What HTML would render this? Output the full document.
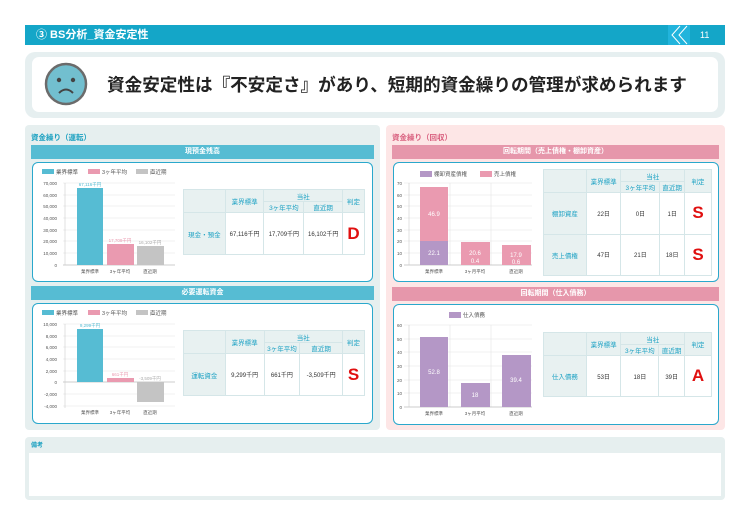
<!DOCTYPE html>
<html><head><meta charset="utf-8"><style>
*{margin:0;padding:0;box-sizing:border-box}
body{width:750px;height:530px;background:#fff;position:relative;overflow:hidden;font-family:"Liberation Sans","Noto Sans CJK JP",sans-serif;color:#333}
.a{position:absolute}
.hb{left:31px;width:343px;height:14px;color:#fff;font-size:7px;font-weight:bold;text-align:center;line-height:14px}
.box{background:#fff;border:1.5px solid #2aa8cc;border-radius:6px}
table{border-collapse:collapse;position:absolute;font-size:6px;text-align:center}
td{border:1px solid #d5e6e8;background:#fff}
td.h{background:#e8f1f1;color:#1ea2c4;font-size:6.5px}
.j{color:#e01010;font-weight:bold;font-size:17px}
svg text{font-family:"Liberation Sans","Noto Sans CJK JP",sans-serif}
</style></head><body>
<div class="a" style="left:25px;top:25px;width:700px;height:20px;background:#14a6c8"></div>
<div class="a" style="left:36px;top:25px;height:20px;line-height:20px;color:#fff;font-weight:bold;font-size:11px">③ BS分析_資金安定性</div>
<div class="a" style="left:668px;top:25px;width:22px;height:20px;background:#22b4dc"></div>
<svg class="a" style="left:668px;top:25px" width="22" height="20"><polyline points="12,1 4,10 12,19" fill="none" stroke="#fff" stroke-width="1"/><polyline points="19,1 11,10 19,19" fill="none" stroke="#fff" stroke-width="1"/></svg>
<div class="a" style="left:700px;top:25px;height:20px;line-height:20px;color:#fff;font-size:9px">11</div>

<div class="a" style="left:25px;top:52px;width:700px;height:66px;background:#e6eff0;border-radius:10px"></div>
<div class="a" style="left:32px;top:57px;width:686px;height:55px;background:#fff;border-radius:7px"></div>
<svg class="a" style="left:44px;top:62px" width="44" height="44"><circle cx="22" cy="22" r="20" fill="#72bfcf" stroke="#6b6b6b" stroke-width="2.5"/><circle cx="15" cy="18" r="2.2" fill="#444"/><circle cx="29" cy="18" r="2.2" fill="#444"/><path d="M15 31 Q22 24 29 31" fill="none" stroke="#444" stroke-width="2"/></svg>
<div class="a" style="left:107px;top:72px;font-size:17.6px;font-weight:bold;color:#222;white-space:nowrap">資金安定性は『不安定さ』があり、短期的資金繰りの管理が求められます</div>

<!-- left panel -->
<div class="a" style="left:25px;top:125px;width:355px;height:305px;background:#e6efef;border-radius:4px"></div>
<div class="a" style="left:31px;top:132px;font-size:7.5px;font-weight:bold;color:#1aa0c0">資金繰り（運転）</div>
<div class="a hb" style="top:145px;background:#56bcd3">現預金残高</div>
<div class="a box" style="left:32px;top:162px;width:341px;height:120px"></div>
<div class="a hb" style="top:286px;background:#56bcd3">必要運転資金</div>
<div class="a box" style="left:32px;top:303px;width:341px;height:121px"></div>

<svg class="a" style="left:32px;top:162px" width="150" height="120" font-size="4.5" fill="#555">
<rect x="10" y="7" width="12" height="5" fill="#56bcd3"/><text x="24" y="12" font-size="5.5">業界標準</text>
<rect x="56" y="7" width="12" height="5" fill="#ea9ab0"/><text x="70" y="12" font-size="5.5">3ヶ年平均</text>
<rect x="104" y="7" width="12" height="5" fill="#c4c4c4"/><text x="118" y="12" font-size="5.5">直近期</text>
<g stroke="#e4e4e4" stroke-width="0.6"><line x1="31" y1="21" x2="143" y2="21"/><line x1="31" y1="33" x2="143" y2="33"/><line x1="31" y1="44" x2="143" y2="44"/><line x1="31" y1="56" x2="143" y2="56"/><line x1="31" y1="68" x2="143" y2="68"/><line x1="31" y1="79" x2="143" y2="79"/><line x1="31" y1="91" x2="143" y2="91"/></g>
<line x1="31" y1="103" x2="143" y2="103" stroke="#bbb" stroke-width="0.8"/><line x1="33" y1="21" x2="33" y2="103" stroke="#ccc" stroke-width="0.6"/>
<g text-anchor="end"><text x="25" y="23">70,000</text><text x="25" y="35">60,000</text><text x="25" y="46">50,000</text><text x="25" y="58">40,000</text><text x="25" y="70">30,000</text><text x="25" y="81">20,000</text><text x="25" y="93">10,000</text><text x="25" y="105">0</text></g>
<rect x="45" y="26" width="26" height="77" fill="#56bcd3"/><rect x="75" y="82" width="27" height="21" fill="#ea9ab0"/><rect x="105" y="84" width="27" height="19" fill="#c4c4c4"/>
<g text-anchor="middle"><text x="58" y="24" fill="#56bcd3">67,116千円</text><text x="88" y="80" fill="#ea9ab0">17,709千円</text><text x="118" y="82" fill="#aaa">16,102千円</text>
<text x="58" y="111">業界標準</text><text x="88" y="111">3ヶ年平均</text><text x="118" y="111">直近期</text></g>
</svg>
<table style="left:183px;top:189px;width:182px;height:66px">
<tr style="height:12px"><td class="h" rowspan="2" style="width:42px"></td><td class="h" rowspan="2" style="width:39px">業界標準</td><td class="h" colspan="2">当社</td><td class="h" rowspan="2" style="width:22px">判定</td></tr>
<tr style="height:11px"><td class="h" style="width:40px">3ヶ年平均</td><td class="h" style="width:39px">直近期</td></tr>
<tr><td class="h">現金・預金</td><td>67,116千円</td><td>17,709千円</td><td>16,102千円</td><td class="j">D</td></tr></table>

<svg class="a" style="left:32px;top:303px" width="150" height="120" font-size="4.5" fill="#555">
<rect x="10" y="7" width="12" height="5" fill="#56bcd3"/><text x="24" y="12" font-size="5.5">業界標準</text>
<rect x="56" y="7" width="12" height="5" fill="#ea9ab0"/><text x="70" y="12" font-size="5.5">3ヶ年平均</text>
<rect x="104" y="7" width="12" height="5" fill="#c4c4c4"/><text x="118" y="12" font-size="5.5">直近期</text>
<g stroke="#e4e4e4" stroke-width="0.6"><line x1="31" y1="21" x2="143" y2="21"/><line x1="31" y1="33" x2="143" y2="33"/><line x1="31" y1="44" x2="143" y2="44"/><line x1="31" y1="56" x2="143" y2="56"/><line x1="31" y1="68" x2="143" y2="68"/><line x1="31" y1="91" x2="143" y2="91"/><line x1="31" y1="103" x2="143" y2="103"/></g>
<line x1="31" y1="79" x2="143" y2="79" stroke="#bbb" stroke-width="0.8"/><line x1="33" y1="21" x2="33" y2="105" stroke="#ccc" stroke-width="0.6"/>
<g text-anchor="end"><text x="25" y="23">10,000</text><text x="25" y="35">8,000</text><text x="25" y="46">6,000</text><text x="25" y="58">4,000</text><text x="25" y="70">2,000</text><text x="25" y="81">0</text><text x="25" y="93">-2,000</text><text x="25" y="105">-4,000</text></g>
<rect x="45" y="26" width="26" height="53" fill="#56bcd3"/><rect x="75" y="75" width="27" height="4" fill="#ea9ab0"/><rect x="105" y="79" width="27" height="20" fill="#c4c4c4"/>
<g text-anchor="middle"><text x="58" y="24" fill="#56bcd3">9,299千円</text><text x="88" y="73" fill="#ea9ab0">661千円</text><text x="118" y="77" fill="#aaa">-3,509千円</text>
<text x="58" y="111">業界標準</text><text x="88" y="111">3ヶ年平均</text><text x="118" y="111">直近期</text></g>
</svg>
<table style="left:183px;top:330px;width:182px;height:66px">
<tr style="height:12px"><td class="h" rowspan="2" style="width:42px"></td><td class="h" rowspan="2" style="width:39px">業界標準</td><td class="h" colspan="2">当社</td><td class="h" rowspan="2" style="width:22px">判定</td></tr>
<tr style="height:11px"><td class="h" style="width:36px">3ヶ年平均</td><td class="h" style="width:43px">直近期</td></tr>
<tr><td class="h">運転資金</td><td>9,299千円</td><td>661千円</td><td>-3,509千円</td><td class="j">S</td></tr></table>

<!-- right panel -->
<div class="a" style="left:386px;top:125px;width:339px;height:305px;background:#fde6e6;border-radius:4px"></div>
<div class="a" style="left:392px;top:132px;font-size:7.5px;font-weight:bold;color:#d9607f">資金繰り（回収）</div>
<div class="a hb" style="left:392px;width:327px;top:145px;background:#e697ab">回転期間（売上債権・棚卸資産）</div>
<div class="a box" style="left:393px;top:162px;width:326px;height:120px"></div>
<div class="a hb" style="left:392px;width:327px;top:287px;background:#e697ab">回転期間（仕入債務）</div>
<div class="a box" style="left:393px;top:304px;width:326px;height:121px"></div>

<svg class="a" style="left:393px;top:162px" width="148" height="120" font-size="4.5" fill="#555">
<rect x="27" y="9" width="12" height="6" fill="#b497c6"/><text x="41" y="14" font-size="5.5">棚卸資産債権</text>
<rect x="87" y="9" width="12" height="6" fill="#ea9ab0"/><text x="101" y="14" font-size="5.5">売上債権</text>
<g stroke="#e4e4e4" stroke-width="0.6"><line x1="11" y1="21" x2="139" y2="21"/><line x1="11" y1="33" x2="139" y2="33"/><line x1="11" y1="44" x2="139" y2="44"/><line x1="11" y1="56" x2="139" y2="56"/><line x1="11" y1="68" x2="139" y2="68"/><line x1="11" y1="79" x2="139" y2="79"/><line x1="11" y1="91" x2="139" y2="91"/><line x1="57" y1="21" x2="57" y2="103"/><line x1="98" y1="21" x2="98" y2="103"/></g>
<line x1="11" y1="103" x2="139" y2="103" stroke="#bbb" stroke-width="0.8"/><line x1="16" y1="21" x2="16" y2="103" stroke="#ccc" stroke-width="0.6"/>
<g text-anchor="end"><text x="9" y="23">70</text><text x="9" y="35">60</text><text x="9" y="46">50</text><text x="9" y="58">40</text><text x="9" y="70">30</text><text x="9" y="81">20</text><text x="9" y="93">10</text><text x="9" y="105">0</text></g>
<rect x="27" y="25" width="28" height="54" fill="#ea9ab0"/><rect x="27" y="79" width="28" height="24" fill="#b497c6"/>
<rect x="68" y="80" width="29" height="23" fill="#ea9ab0"/><rect x="109" y="83" width="29" height="20" fill="#ea9ab0"/>
<g text-anchor="middle" fill="#fff" font-size="6"><text x="41" y="54">46.9</text><text x="41" y="93">22.1</text><text x="82" y="93">20.6</text><text x="82" y="101">0.4</text><text x="123" y="95">17.9</text><text x="123" y="102">0.6</text></g>
<g text-anchor="middle"><text x="41" y="111">業界標準</text><text x="82" y="111">3ヶ月平均</text><text x="123" y="111">直近期</text></g>
</svg>
<table style="left:543px;top:169px;width:169px;height:107px">
<tr style="height:12px"><td class="h" rowspan="2" style="width:43px"></td><td class="h" rowspan="2" style="width:35px">業界標準</td><td class="h" colspan="2">当社</td><td class="h" rowspan="2" style="width:27px">判定</td></tr>
<tr style="height:11px"><td class="h" style="width:39px">3ヶ年平均</td><td class="h" style="width:25px">直近期</td></tr>
<tr><td class="h">棚卸資産</td><td>22日</td><td>0日</td><td>1日</td><td class="j">S</td></tr>
<tr><td class="h">売上債権</td><td>47日</td><td>21日</td><td>18日</td><td class="j">S</td></tr></table>

<svg class="a" style="left:393px;top:304px" width="148" height="120" font-size="4.5" fill="#555">
<rect x="56" y="8" width="12" height="6" fill="#b497c6"/><text x="70" y="13" font-size="5.5">仕入債務</text>
<g stroke="#e4e4e4" stroke-width="0.6"><line x1="11" y1="21" x2="139" y2="21"/><line x1="11" y1="35" x2="139" y2="35"/><line x1="11" y1="48" x2="139" y2="48"/><line x1="11" y1="62" x2="139" y2="62"/><line x1="11" y1="76" x2="139" y2="76"/><line x1="11" y1="89" x2="139" y2="89"/><line x1="57" y1="21" x2="57" y2="103"/><line x1="98" y1="21" x2="98" y2="103"/></g>
<line x1="11" y1="103" x2="139" y2="103" stroke="#bbb" stroke-width="0.8"/><line x1="16" y1="21" x2="16" y2="103" stroke="#ccc" stroke-width="0.6"/>
<g text-anchor="end"><text x="9" y="23">60</text><text x="9" y="37">50</text><text x="9" y="50">40</text><text x="9" y="64">30</text><text x="9" y="78">20</text><text x="9" y="91">10</text><text x="9" y="105">0</text></g>
<rect x="27" y="33" width="28" height="70" fill="#b497c6"/><rect x="68" y="79" width="29" height="24" fill="#b497c6"/><rect x="109" y="51" width="29" height="52" fill="#b497c6"/>
<g text-anchor="middle" fill="#fff" font-size="6"><text x="41" y="70">52.8</text><text x="82" y="93">18</text><text x="123" y="78">39.4</text></g>
<g text-anchor="middle"><text x="41" y="111">業界標準</text><text x="82" y="111">3ヶ月平均</text><text x="123" y="111">直近期</text></g>
</svg>
<table style="left:543px;top:332px;width:169px;height:65px">
<tr style="height:12px"><td class="h" rowspan="2" style="width:43px"></td><td class="h" rowspan="2" style="width:35px">業界標準</td><td class="h" colspan="2">当社</td><td class="h" rowspan="2" style="width:27px">判定</td></tr>
<tr style="height:11px"><td class="h" style="width:38px">3ヶ年平均</td><td class="h" style="width:26px">直近期</td></tr>
<tr><td class="h">仕入債務</td><td>53日</td><td>18日</td><td>39日</td><td class="j">A</td></tr></table>

<!-- remarks -->
<div class="a" style="left:25px;top:437px;width:700px;height:63px;background:#e6efef;border-radius:4px"></div>
<div class="a" style="left:31px;top:440px;font-size:6px;font-weight:bold;color:#1aa0c0">備考</div>
<div class="a" style="left:29px;top:453px;width:692px;height:43px;background:#fff"></div>
</body></html>
